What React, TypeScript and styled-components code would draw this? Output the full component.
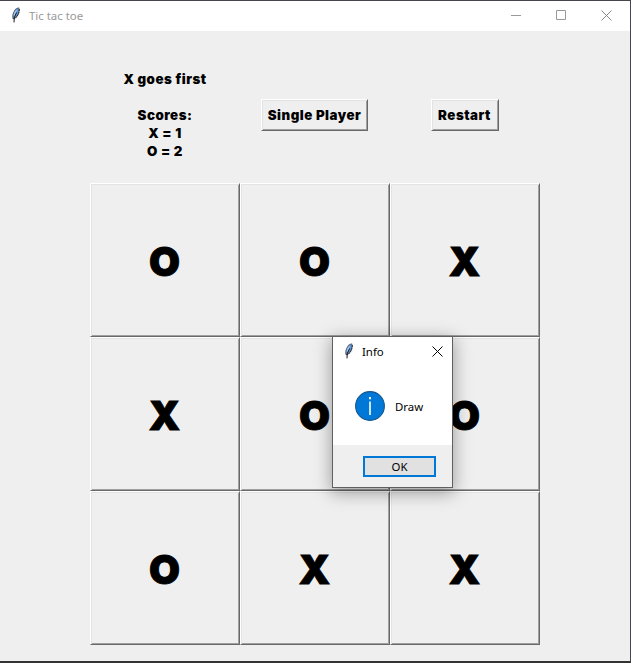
import React from "react";
import styled, { createGlobalStyle, css } from "styled-components";

const GlobalStyle = createGlobalStyle`
  * { box-sizing: border-box; }
  body { margin: 0; background: #efefef; overflow: hidden; }
`;

const uiFont = css`
  font-family: "Noto Sans", "Open Sans", sans-serif;
  font-size: 11.4px;
  line-height: 16px;
  white-space: nowrap;
`;

const blackFont = css`
  font-family: Inter, "Liberation Sans", sans-serif;
  font-weight: 900;
  color: #000;
  white-space: nowrap;
`;

const raised = css`
  background: #efefef;
  border: 1px solid;
  border-color: #fff #696969 #696969 #fff;
  box-shadow: inset 1px 1px #e3e3e3, inset -1px -1px #a0a0a0;
`;

const Window = styled.main`
  position: relative;
  width: 631px;
  height: 663px;
  border-top: 1px solid #46464c;
  border-right: 1px solid #46464c;
  border-bottom: 2px solid #333;
  background: #efefef;
`;

const TitleBar = styled.header`
  display: flex;
  align-items: center;
  height: 30px;
  padding-left: 10px;
  background: #fff;

  > svg { margin-top: -2px; }
`;

const WindowTitle = styled.span<{ $muted?: boolean; $width: number }>`
  ${uiFont}
  width: ${(p) => p.$width}px;
  color: ${(p) => (p.$muted ? "#999" : "#000")};
  margin-left: 7px;
`;

const Controls = styled.div`
  display: flex;
  gap: 35px;
  margin: -2px 18px 0 auto;
`;

const Header = styled.section`
  display: grid;
  grid-template-columns: 150px 149px 151px;
  justify-items: center;
  align-items: center;
  width: 450px;
  height: 152px;
  margin-left: 90px;
  padding: 39px 0 23px;
`;

const Status = styled.div`
  ${blackFont}
  font-size: 13.3px;
  letter-spacing: 0.5px;
  line-height: 18px;
  text-align: center;
  white-space: pre;
`;

const ActionButton = styled.button<{ $width: number }>`
  ${raised}
  ${blackFont}
  display: flex;
  align-items: center;
  justify-content: center;
  width: ${(p) => p.$width}px;
  height: 32px;
  padding: 0;
  font-size: 13.3px;
  letter-spacing: 0.5px;
`;

const Board = styled.section`
  display: grid;
  grid-template-columns: repeat(3, 150px);
  grid-auto-rows: 154px;
  width: 450px;
  margin-left: 90px;
`;

const Cell = styled.button`
  ${raised}
  ${blackFont}
  display: flex;
  align-items: center;
  justify-content: center;
  padding: 4px 1px 0 0;
  font-size: 40px;
  line-height: 48px;
  -webkit-text-stroke: 0.9px #000;
`;

const Dialog = styled.section`
  position: absolute;
  left: 332px;
  top: 335px;
  width: 121px;
  height: 152px;
  border: 1px solid #606060;
  background: #fff;
  box-shadow: 0 4px 16px 1px rgba(0, 0, 0, 0.34);
`;

const DialogTitle = styled.div`
  display: flex;
  align-items: center;
  height: 30px;
  padding: 0 9px 0 10px;

  svg { margin-top: -2px; }
  svg:last-child { margin-left: auto; }
`;

const Message = styled.div`
  ${uiFont}
  display: flex;
  align-items: center;
  gap: 10px;
  height: 78px;
  padding-left: 22px;

  span { padding-top: 2px; }
`;

const DialogFooter = styled.footer`
  height: 42px;
  padding: 11px 16px 0 30px;
  background: #efefef;
`;

const OkButton = styled.button`
  ${uiFont}
  display: block;
  width: 73px;
  height: 21px;
  padding: 0;
  border: 2px solid #0078d7;
  background: #e1e1e1;
  color: #000;
`;

const Feather = () => (
  <svg width="12" height="16" viewBox="0 0 12 16">
    <path d="M2.6 12C1.8 9 2.4 6 4.4 3.2C6 1.1 7.8.2 9.3.8C9.9 4.2 8.9 8 6 11L4 12.3Z" fill="#5a6068" />
    <path d="M3.3 10.8C3 8 3.8 5.4 5.4 3.4C6.7 1.9 7.8 1.4 8.7 1.5C9 4.6 7.9 7.8 5.3 10.4Z" fill="#5b98e0" />
    <path d="M3.6 8.5C4 5.6 5.2 3.6 7.2 2.2L4.8 8.8Z" fill="#a9cbf0" />
    <path d="M9.3 2C9.4 5.4 8.4 8.2 5.8 10.8" fill="none" stroke="#20242a" strokeWidth="1" strokeDasharray="2 .7" />
    <path d="M6.6 5.5L4.3 10.4L4 15.4" fill="none" stroke="#151515" strokeWidth="1" />
  </svg>
);

const Close = ({ color }: { color: string }) => (
  <svg width="11" height="11" viewBox="0 0 11 11">
    <path d="M.5.5L10.5 10.5M10.5.5L.5 10.5" stroke={color} strokeWidth="1" />
  </svg>
);

const InfoIcon = () => (
  <svg width="30" height="30" viewBox="0 0 30 30">
    <circle cx="15" cy="15" r="14.4" fill="#0078d7" stroke="#17588f" strokeWidth="1.1" />
    <path d="M14 6h2v2.2h-2zM14.2 10.5h1.6v13.5h-1.6z" fill="#fff" />
  </svg>
);

const marks = ["O", "O", "X", "X", "O", "O", "O", "X", "X"];

export default function App() {
  return (
    <>
      <GlobalStyle />
      <Window>
        <TitleBar>
          <Feather />
          <WindowTitle $muted $width={70}>Tic tac toe</WindowTitle>
          <Controls>
            <svg width="10" height="11" viewBox="0 0 10 11">
              <path d="M0 5.5h10" stroke="#999" />
            </svg>
            <svg width="10" height="11" viewBox="0 0 10 11">
              <path d="M.5 .5h9v9h-9z" fill="none" stroke="#999" />
            </svg>
            <Close color="#888" />
          </Controls>
        </TitleBar>
        <Header>
          <Status>{"X goes first\n\nScores:\nX = 1\nO = 2"}</Status>
          <ActionButton $width={107}>Single Player</ActionButton>
          <ActionButton $width={68}>Restart</ActionButton>
        </Header>
        <Board>
          {marks.map((mark, i) => (
            <Cell key={i}>{mark}</Cell>
          ))}
        </Board>
        <Dialog role="dialog">
          <DialogTitle>
            <Feather />
            <WindowTitle $width={30}>Info</WindowTitle>
            <Close color="#000" />
          </DialogTitle>
          <Message>
            <InfoIcon />
            <span>Draw</span>
          </Message>
          <DialogFooter>
            <OkButton>OK</OkButton>
          </DialogFooter>
        </Dialog>
      </Window>
    </>
  );
}
